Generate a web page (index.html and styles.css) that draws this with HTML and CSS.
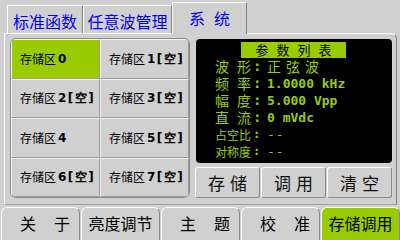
FILE: index.html
```html
<!DOCTYPE html>
<html>
<head>
<meta charset="utf-8">
<link rel="stylesheet" href="styles.css">
</head>
<body>
<div class="screen">
  <div class="top-tabs">
    <div class="ttab t1">标准函数</div>
    <div class="ttab t2">任意波管理</div>
    <div class="ttab t3 active"><span class="gap8">系</span>统</div>
  </div>
  <div class="panel">
    <div class="slots">
      <div class="slot sel">存储区<b>0</b></div>
      <div class="slot">存储区<b>1[空]</b></div>
      <div class="slot">存储区<b>2[空]</b></div>
      <div class="slot">存储区<b>3[空]</b></div>
      <div class="slot">存储区<b>4</b></div>
      <div class="slot">存储区<b>5[空]</b></div>
      <div class="slot">存储区<b>6[空]</b></div>
      <div class="slot">存储区<b>7[空]</b></div>
    </div>
    <div class="side">
      <div class="lcd">
        <div class="lcd-title">参数列表</div>
        <div class="row big"><span class="lab"><span class="g8">波</span>形<span class="colon">:</span></span><span class="val cn"><span class="g5">正</span><span class="g5">弦</span>波</span></div>
        <div class="row big"><span class="lab"><span class="g8">频</span>率<span class="colon">:</span></span><span class="val">1.0000 kHz</span></div>
        <div class="row big"><span class="lab"><span class="g8">幅</span>度<span class="colon">:</span></span><span class="val">5.000 Vpp</span></div>
        <div class="row big"><span class="lab"><span class="g8">直</span>流<span class="colon">:</span></span><span class="val">0 mVdc</span></div>
        <div class="row small"><span class="lab">占空比<span class="colon">:</span></span><span class="val dash">--</span></div>
        <div class="row small"><span class="lab">对称度<span class="colon">:</span></span><span class="val dash">--</span></div>
      </div>
      <div class="btns">
        <div class="btn">存储</div>
        <div class="btn">调用</div>
        <div class="btn">清空</div>
      </div>
    </div>
  </div>
  <div class="bottom-tabs">
    <div class="btab wide">关于</div>
    <div class="btab">亮度调节</div>
    <div class="btab wide">主题</div>
    <div class="btab wide">校准</div>
    <div class="btab active">存储调用</div>
  </div>
</div>
</body>
</html>
```
FILE: styles.css
```css
* { box-sizing: border-box; }
html, body { margin: 0; padding: 0; }
body { width: 400px; height: 240px; overflow: hidden; }

.screen {
  width: 400px;
  height: 240px;
  background: #d0d0d0;
  overflow: hidden;
  font-family: "Noto Sans CJK SC", "Noto Sans", sans-serif;
}

.top-tabs {
  display: flex;
  align-items: flex-end;
  height: 33px;
  padding-left: 7px;
  position: relative;
  z-index: 1;
}
.ttab {
  height: 28px;
  border-top: 1px solid #fff;
  border-left: 1px solid #fff;
  border-right: 1px solid #808080;
  color: #0000ff;
  font-size: 16px;
  line-height: 22px;
  padding-top: 4px;
  text-align: center;
  background: #d0d0d0;
  white-space: nowrap;
}
.t1 { width: 76px; }
.t2 { width: 89px; }
.t3 { width: 75px; }
.gap8 { margin-right: 9px; }
.ttab.active {
  height: 32px;
  margin-bottom: -1px;
}

.panel {
  margin-left: 4px;
  width: 393px;
  height: 172px;
  border-top: 1px solid #fff;
  border-left: 1px solid #fff;
  border-right: 1px solid #808080;
  border-bottom: 1px solid #a0a0a0;
  border-top-right-radius: 6px;
  display: flex;
  gap: 5px;
  padding: 4px 4px 0 5px;
}

.slots {
  width: 180px;
  height: 160px;
  display: grid;
  grid-template-columns: 1fr 1fr;
  grid-template-rows: repeat(4, 1fr);
  border: 1px solid #8c8c8c;
  border-radius: 6px;
  overflow: hidden;
}
.slot {
  display: flex;
  align-items: center;
  padding-left: 8px;
  font-size: 12px;
  line-height: 16px;
  color: #000;
  border-top: 1px solid #f4f4f4;
  border-left: 1px solid #f4f4f4;
  border-right: 1px solid #9a9a9a;
  border-bottom: 1px solid #9a9a9a;
  white-space: nowrap;
}
.slot b {
  font-family: "DejaVu Sans", sans-serif;
  font-size: 12px;
  letter-spacing: 1.5px;
  margin-left: 2px;
}
.slot.sel { background: #99cc00; }

.side {
  width: 197px;
  display: flex;
  flex-direction: column;
}
.lcd {
  margin: 1px 0 0 1px;
  height: 124px;
  background: #000;
  border-radius: 4px;
  padding: 3px 0 0 19px;
  color: #99cc00;
}
.lcd-title {
  width: 105px;
  height: 16px;
  margin-left: 26px;
  background: #99cc00;
  color: #000;
  font-size: 13px;
  line-height: 16px;
  letter-spacing: 8px;
  padding-left: 8px;
  text-align: center;
}
.row {
  display: flex;
  align-items: center;
  height: 17px;
  line-height: 17px;
  white-space: nowrap;
}
.lab {
  width: 52px;
  flex: none;
  display: flex;
  align-items: center;
}
.g8 { margin-right: 8px; }
.g5 { margin-right: 5px; }
.colon { margin-left: 2px; font-family: "DejaVu Sans Mono", monospace; font-weight: bold; }
.row.big .lab { font-size: 14px; }
.row.small .lab { font-size: 12px; }
.val {
  font-family: "DejaVu Sans Mono", monospace;
  font-weight: bold;
  font-size: 13px;
}
.val.cn {
  font-family: "Noto Sans CJK SC", sans-serif;
  font-weight: normal;
  font-size: 14px;
  display: flex;
}
.val.dash { font-weight: normal; letter-spacing: 1px; }

.btns {
  margin-top: 4px;
  height: 31px;
  display: flex;
  gap: 1px;
}
.btn {
  flex: 1;
  border-top: 1px solid #fff;
  border-left: 1px solid #fff;
  border-right: 1px solid #8a8a8a;
  border-bottom: 1px solid #8a8a8a;
  border-radius: 3px;
  font-size: 17px;
  line-height: 29px;
  text-align: center;
  color: #111;
  letter-spacing: 5px;
  padding-left: 5px;
}

.bottom-tabs {
  margin-top: 2px;
  height: 33px;
  display: flex;
  gap: 1px;
  padding-left: 1px;
}
.btab {
  width: 79px;
  border-top: 1px solid #fff;
  border-left: 1px solid #fff;
  border-right: 1px solid #888;
  border-radius: 6px 6px 0 0;
  font-size: 16px;
  line-height: 30px;
  text-align: center;
  color: #000;
  white-space: nowrap;
}
.btab.wide { letter-spacing: 18px; padding-left: 18px; }
.btab.active { background: #99cc00; }
```
